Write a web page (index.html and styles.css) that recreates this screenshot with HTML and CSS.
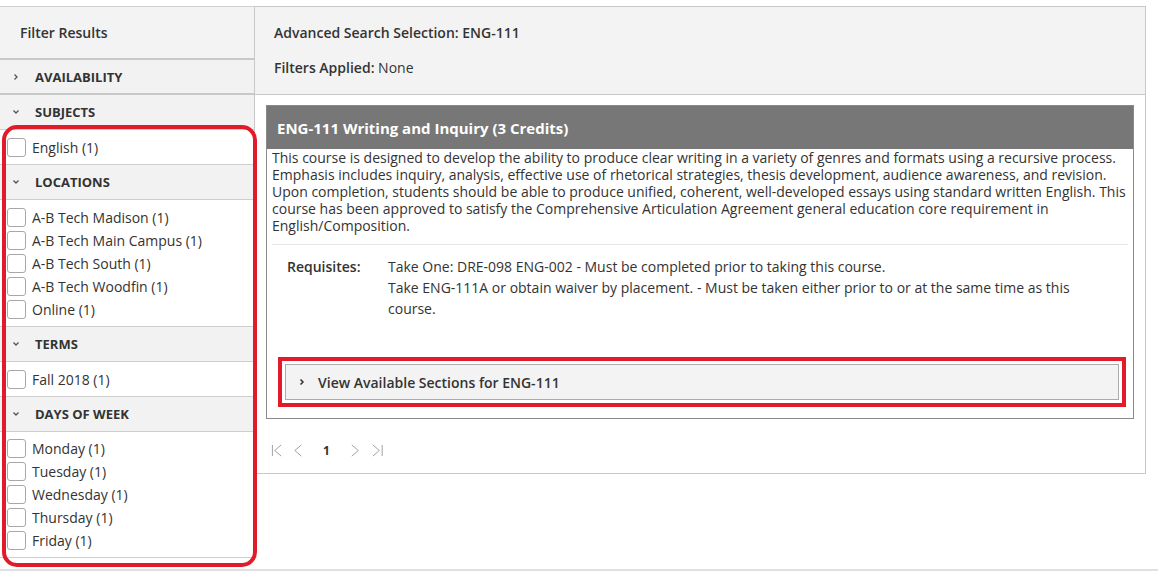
FILE: index.html
```html
<!DOCTYPE html>
<html>
<head>
<meta charset="utf-8">
<link rel="stylesheet" href="styles.css">
</head>
<body>
<div class="page">
  <aside class="sidebar">
    <div class="side-title">Filter Results</div>
    <div class="sec-head closed"><svg class="chev" viewBox="0 0 8 8"><polyline points="2.5,1.5 5,4 2.5,6.5"/></svg><span>AVAILABILITY</span></div>
    <div class="sec-head"><svg class="chev" viewBox="0 0 8 8"><polyline points="1.5,2.5 4,5 6.5,2.5"/></svg><span>SUBJECTS</span></div>
    <ul class="opts">
      <li><span class="cb"></span>English (1)</li>
    </ul>
    <div class="sec-head"><svg class="chev" viewBox="0 0 8 8"><polyline points="1.5,2.5 4,5 6.5,2.5"/></svg><span>LOCATIONS</span></div>
    <ul class="opts">
      <li><span class="cb"></span>A-B Tech Madison (1)</li>
      <li><span class="cb"></span>A-B Tech Main Campus (1)</li>
      <li><span class="cb"></span>A-B Tech South (1)</li>
      <li><span class="cb"></span>A-B Tech Woodfin (1)</li>
      <li><span class="cb"></span>Online (1)</li>
    </ul>
    <div class="sec-head"><svg class="chev" viewBox="0 0 8 8"><polyline points="1.5,2.5 4,5 6.5,2.5"/></svg><span>TERMS</span></div>
    <ul class="opts">
      <li><span class="cb"></span>Fall 2018 (1)</li>
    </ul>
    <div class="sec-head"><svg class="chev" viewBox="0 0 8 8"><polyline points="1.5,2.5 4,5 6.5,2.5"/></svg><span>DAYS OF WEEK</span></div>
    <ul class="opts last">
      <li><span class="cb"></span>Monday (1)</li>
      <li><span class="cb"></span>Tuesday (1)</li>
      <li><span class="cb"></span>Wednesday (1)</li>
      <li><span class="cb"></span>Thursday (1)</li>
      <li><span class="cb"></span>Friday (1)</li>
    </ul>
    <div class="annot-side"></div>
  </aside>
  <main class="results">
    <div class="res-head">
      <div class="sel">Advanced Search Selection: ENG-111</div>
      <div class="applied"><b>Filters Applied:</b> None</div>
    </div>
    <div class="res-body">
      <section class="card">
        <h2 class="card-title">ENG-111 Writing and Inquiry (3 Credits)</h2>
        <p class="desc">This course is designed to develop the ability to produce clear writing in a variety of genres and formats using a recursive process. Emphasis includes inquiry, analysis, effective use of rhetorical strategies, thesis development, audience awareness, and revision. Upon completion, students should be able to produce unified, coherent, well-developed essays using standard written English. This course has been approved to satisfy the Comprehensive Articulation Agreement general education core requirement in English/Composition.</p>
        <div class="reqs">
          <div class="req-label">Requisites:</div>
          <div class="req-vals">
            <div>Take One: DRE-098 ENG-002 - Must be completed prior to taking this course.</div>
            <div>Take ENG-111A or obtain waiver by placement. - Must be taken either prior to or at the same time as this course.</div>
          </div>
        </div>
        <div class="annot-btn">
          <div class="sections-btn"><svg class="chev" viewBox="0 0 8 8"><polyline points="2.5,1.5 5,4 2.5,6.5"/></svg><span>View Available Sections for ENG-111</span></div>
        </div>
      </section>
      <nav class="pager">
        <svg class="pg" viewBox="0 0 14 14"><line x1="1.5" y1="1" x2="1.5" y2="13"/><polyline points="11,1 4,7 11,13"/></svg>
        <svg class="pg" viewBox="0 0 14 14"><polyline points="9,1 2,7 9,13"/></svg>
        <span class="pnum">1</span>
        <svg class="pg" viewBox="0 0 14 14"><polyline points="3,1 10,7 3,13"/></svg>
        <svg class="pg" viewBox="0 0 14 14"><polyline points="2,1 9,7 2,13"/><line x1="12" y1="1" x2="12" y2="13"/></svg>
      </nav>
    </div>
  </main>
</div>
<footer class="foot"></footer>
</body>
</html>
```
FILE: styles.css
```css
* { box-sizing: border-box; }
html, body { margin: 0; padding: 0; background: #fff; }
body {
  font-family: "Open Sans", "Liberation Sans", sans-serif;
  font-size: 14px;
  color: #333;
  width: 1158px;
  height: 573px;
  overflow: hidden;
  position: relative;
}
.page {
  display: flex;
  align-items: flex-start;
  padding-top: 6px;
}
.sidebar {
  position: relative;
  width: 254px;
  border-top: 1px solid #d0d0d0;
}
.side-title {
  height: 53px;
  background: #f3f3f3;
  padding: 16px 0 0 20px;
  font-weight: 600;
  font-size: 14px;
  border-bottom: 2px solid #c8c8c8;
}
.sec-head {
  height: 35px;
  background: #f2f2f2;
  border-bottom: 1px solid #cfcfcf;
  display: flex;
  align-items: center;
  font-weight: 700;
  font-size: 13px;
  color: #333;
}
.sec-head.closed { border-bottom: 2px solid #c8c8c8; }
.sec-head .chev {
  width: 8px; height: 8px;
  margin: 0 15px 0 12px;
  fill: none; stroke: #555; stroke-width: 1.3;
}
.opts {
  list-style: none;
  margin: 0;
  padding: 6px 0 5px;
  border-bottom: 1px solid #cfcfcf;
}
.opts.last { padding-top: 5px; }
.opts li {
  height: 23px;
  display: flex;
  align-items: center;
  font-size: 14px;
  color: #333;
}
.cb {
  width: 19px; height: 19px;
  border: 1px solid #a8a8a8;
  border-radius: 3px;
  margin: 0 6px 0 7px;
  background: #fff;
}
.annot-side {
  position: absolute;
  left: 2px;
  top: 118px;
  width: 255px;
  height: 442px;
  border: 4px solid #e21b2a;
  border-radius: 15px;
  pointer-events: none;
}
.results {
  width: 892px;
  border: 1px solid #c8c8c8;
  margin-left: 0;
}
.res-head {
  background: #f3f3f3;
  height: 88px;
  border-bottom: 1px solid #c8c8c8;
  padding: 16px 0 0 19px;
}
.sel { font-weight: 600; line-height: 20px; }
.applied { margin-top: 15px; line-height: 20px; }
.applied b { font-weight: 600; }
.res-body {
  padding: 10px 11px 0 11px;
  height: 378px;
}
.card {
  border: 1px solid #8a8a8a;
  height: 314px;
}
.card-title {
  margin: 0;
  background: #777;
  color: #fff;
  font-size: 15px;
  font-weight: 700;
  height: 43px;
  line-height: 45px;
  padding-left: 10px;
}
.desc {
  margin: 0 5px;
  padding: 0 0 10px 0;
  line-height: 17px;
  font-size: 14px;
  border-bottom: 1px solid #e6e6e6;
}
.reqs {
  display: flex;
  padding: 11px 0 0 20px;
  line-height: 21px;
  min-height: 112px;
}
.req-label { width: 101px; font-weight: 600; }
.req-vals { width: 720px; }
.annot-btn {
  margin: 0 7px 0 11px;
  border: 4px solid #e21b2a;
  padding: 3px;
}
.sections-btn {
  height: 36px;
  background: #f3f3f3;
  border: 1px solid #ababab;
  display: flex;
  align-items: center;
  font-weight: 600;
  font-size: 14px;
}
.sections-btn .chev {
  width: 8px; height: 8px;
  margin: 0 12px 0 12px;
  fill: none; stroke: #333; stroke-width: 1.5;
}
.pager {
  display: flex;
  align-items: center;
  height: 40px;
  margin-top: 11px;
  padding-left: 5px;
}
.pg {
  width: 13px; height: 13px;
  fill: none; stroke: #999; stroke-width: 1;
  margin-right: 9px;
}
.pnum {
  font-size: 12px;
  font-weight: 700;
  margin: 0 19px 0 8px;
}
.foot {
  position: absolute;
  left: 0; right: 0;
  top: 569px;
  border-top: 2px solid #e0e0e0;
}
```
